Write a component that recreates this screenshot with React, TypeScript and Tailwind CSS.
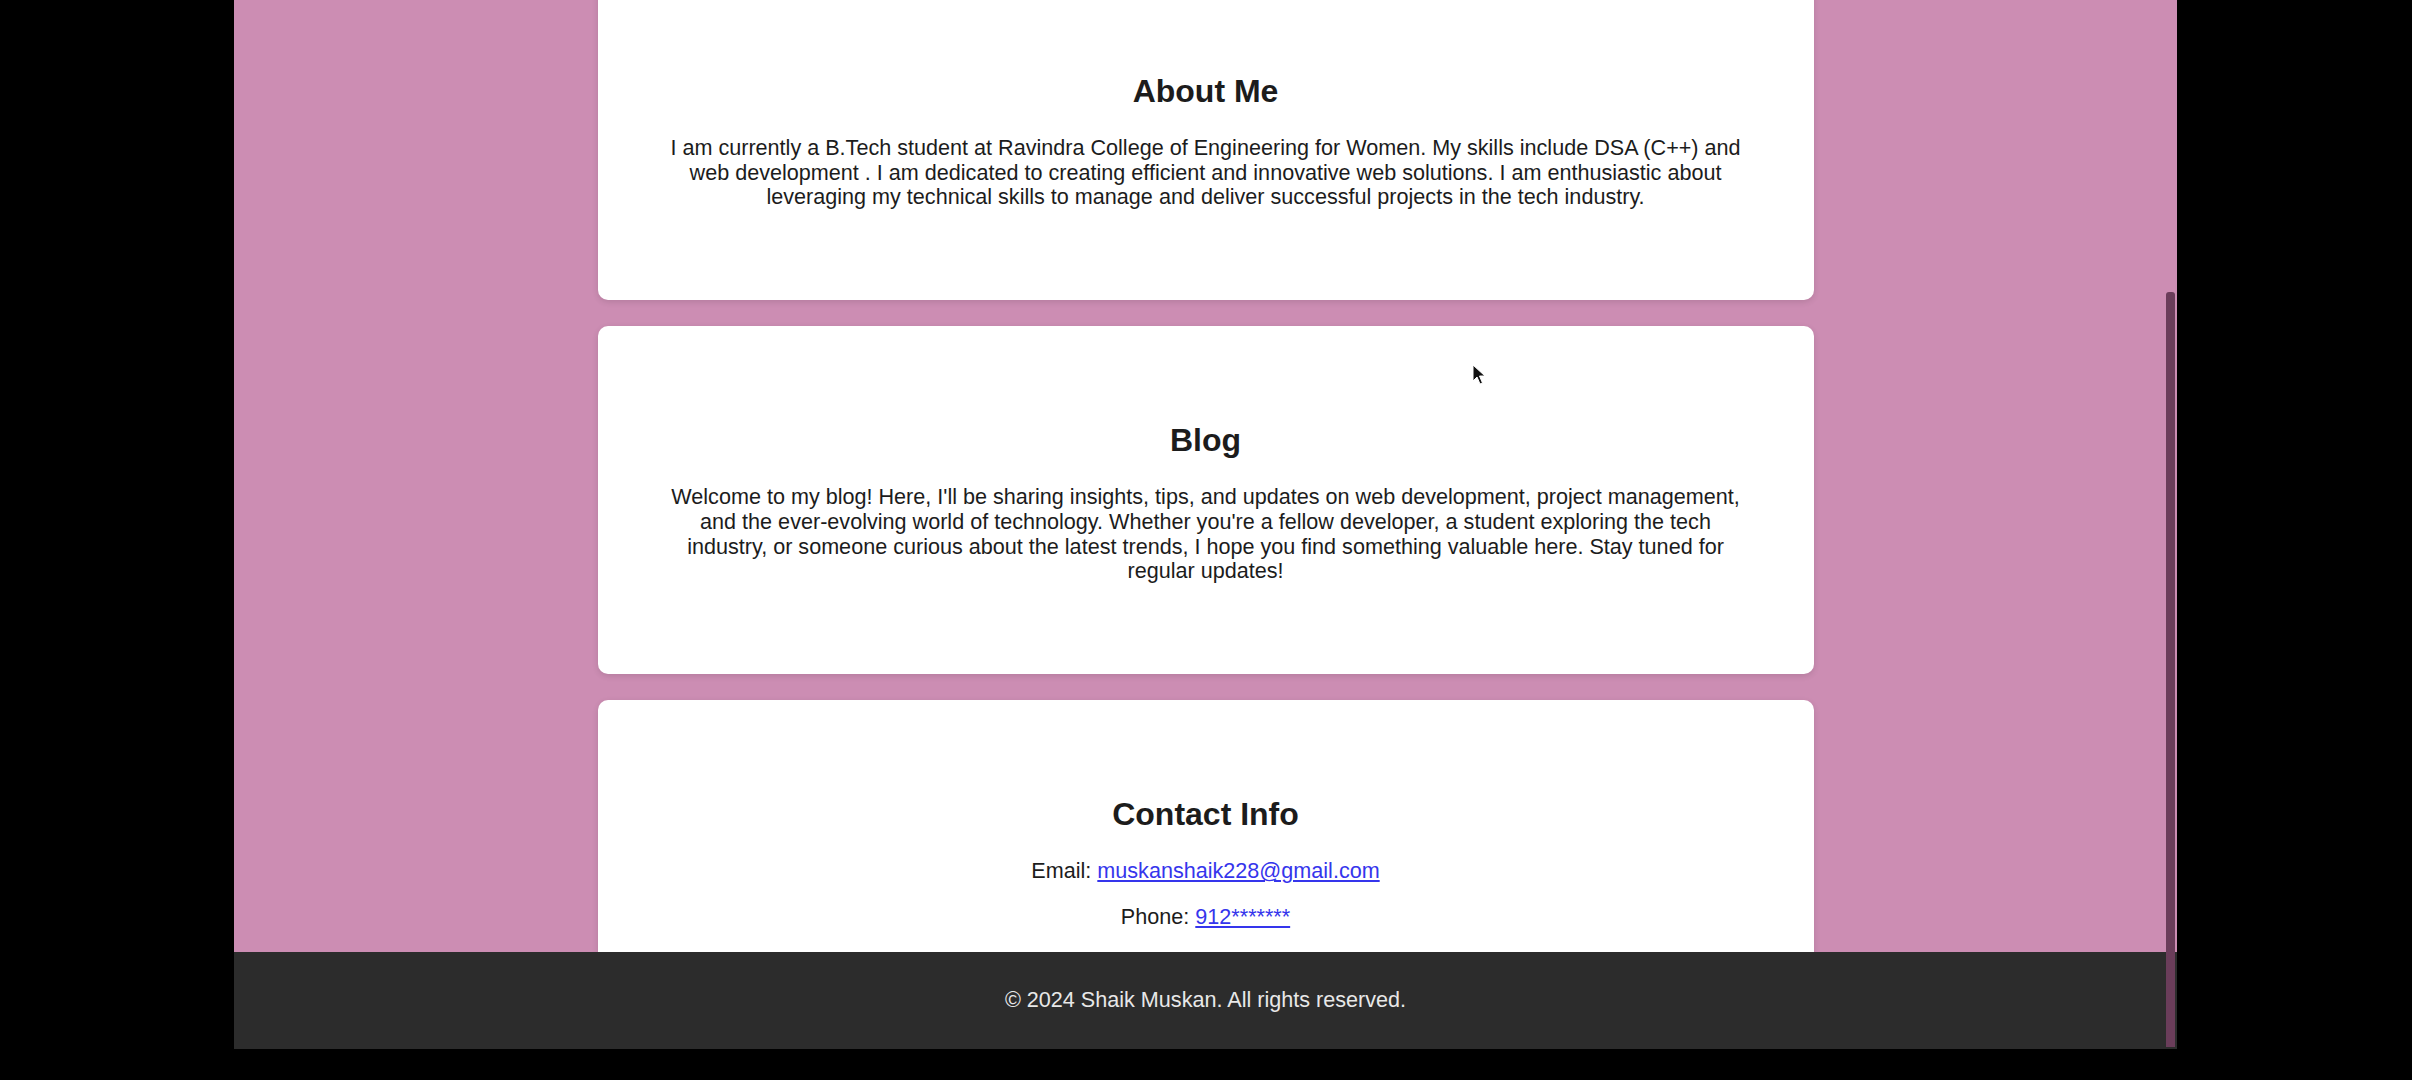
import React from 'react'

const sections = [
    {
        title: "About Me",
        text: "I am currently a B.Tech student at Ravindra College of Engineering for Women. My skills include DSA (C++) and web development . I am dedicated to creating efficient and innovative web solutions. I am enthusiastic about leveraging my technical skills to manage and deliver successful projects in the tech industry.",
    },
    {
        title: "Blog",
        text: "Welcome to my blog! Here, I'll be sharing insights, tips, and updates on web development, project management, and the ever-evolving world of technology. Whether you're a fellow developer, a student exploring the tech industry, or someone curious about the latest trends, I hope you find something valuable here. Stay tuned for regular updates!",
    },
]

const Card: React.FC<{ children: React.ReactNode }> = ({ children }) => (
    <section className="w-[1216px] shrink-0 rounded-[10px] bg-white px-[66px] py-[69px] text-center shadow-[0_2px_6px_rgba(0,0,0,0.12)]">
        {children}
    </section>
)

export default function App() {
    return (
        <div className="flex h-[1080px] w-[2412px] overflow-hidden bg-black pl-[234px] font-['Liberation_Sans',Arial,sans-serif] text-[21.6px] leading-[24.6px] text-[#1c1c1c]">
            <div className="relative flex h-[1049px] w-[1943px] flex-col overflow-hidden bg-[#cc8db3]">
                <main className="flex flex-1 flex-col items-center gap-[26px] overflow-hidden -mt-[23px]">
                    {sections.map((s) => (
                        <Card key={s.title}>
                            <h2 className="mb-[26.6px] mt-[26.6px] text-[32px] leading-[37px] font-bold">{s.title}</h2>
                            <p className="my-[21.3px]">{s.text}</p>
                        </Card>
                    ))}
                    <Card>
                        <h2 className="mb-[26.6px] mt-[26.6px] text-[32px] leading-[37px] font-bold">Contact Info</h2>
                        <p className="my-[21.3px]">
                            Email: <a href="#" className="text-[#3535ec] underline">muskanshaik228@gmail.com</a>
                        </p>
                        <p className="my-[21.3px]">
                            Phone: <a href="#" className="text-[#3535ec] underline">912*******</a>
                        </p>
                    </Card>
                </main>
                <footer className="flex h-[97px] shrink-0 items-center justify-center bg-[#2c2c2c] text-[#e8e8e8]">
                    <p>© 2024 Shaik Muskan. All rights reserved.</p>
                </footer>
                <div className="absolute right-[2px] top-[292px] h-[755px] w-[9px] rounded-t-[3px] bg-[#6a3d5a]" />
                <svg className="absolute left-[1238px] top-[364px]" width="14" height="22" viewBox="0 0 14 22">
                    <path d="M1 1 L1 17 L5 13 L8 20 L10.5 19 L7.5 12 L13 12 Z" fill="#111" stroke="#fff" strokeWidth="1" />
                </svg>
            </div>
        </div>
    )
}
